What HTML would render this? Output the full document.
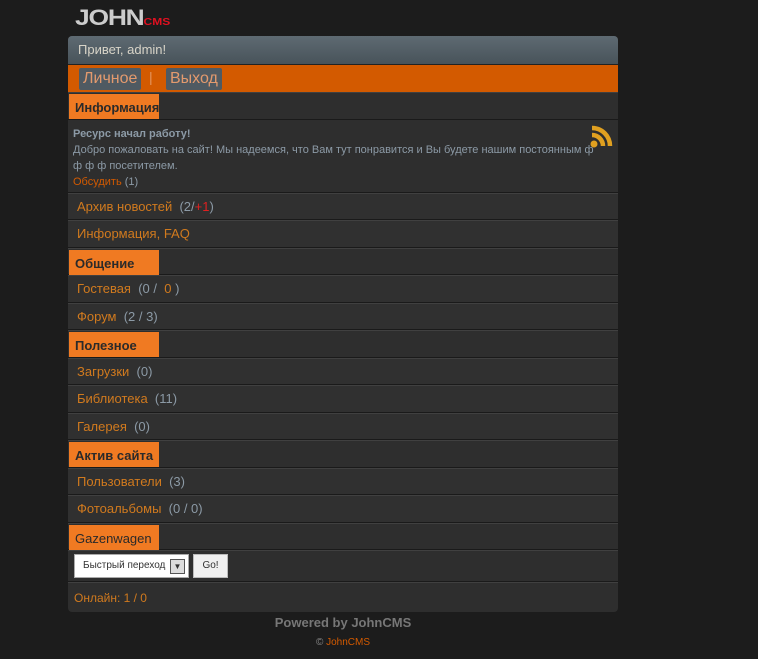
<!DOCTYPE html>
<html><head><meta charset="utf-8"><style>
body{margin:0;background:#1c1c1c;font-family:"Liberation Sans","DejaVu Sans",sans-serif;font-size:12px;}
.wrap{position:absolute;left:68px;top:36px;width:550px;background:#2e2e2e;border-radius:4px;overflow:hidden}
.hdr{height:28px;background:linear-gradient(#5e6a72,#48535a);color:#d8d4c8;font-size:13px;line-height:28px;padding-left:10px;border-bottom:1px solid #222}
.nav{height:27px;background:#d35a00;padding-left:11px;position:relative}
.nav span.b{position:absolute;top:3px;height:22px;background:#4f5a62;color:#e39a6e;font-size:16px;line-height:22px;padding:0 4px;border-radius:2px}
.sec{height:25.5px;border-top:1px solid #404040;border-bottom:1px solid #1a1a1a;background:#2e2e2e;position:relative}
.sec b{position:absolute;left:1px;top:1px;width:84px;height:25px;background:#f07a22;color:#2a2a2a;font-size:13px;line-height:27px;padding-left:6px}
.row{height:25.5px;border-top:1px solid #404040;border-bottom:1px solid #1a1a1a;background:#303030;line-height:26px;padding-left:9px;font-size:13px;color:#d17a1e}
.row i{font-style:normal;color:#8c9aa6}
.news{height:66px;padding:6px 5px 0 5px;color:#8c9aa6;font-size:11px;line-height:16px;position:relative;border-bottom:1px solid #1a1a1a}
.form{height:30px;border-top:1px solid #404040;border-bottom:1px solid #1a1a1a;position:relative}
.online{height:29px;border-top:1px solid #404040;color:#d17a1e;font-size:12px;line-height:31px;padding-left:6px}
</style></head><body>
<div style="position:absolute;left:75px;top:5px;font:bold 22px 'Liberation Sans';color:#ccc;letter-spacing:-1px;transform:scaleX(1.2);transform-origin:left">JOHN<span style="font-size:10px;color:#e01020;letter-spacing:0">CMS</span></div>
<div class="wrap">
<div class="hdr">Привет, admin!</div>
<div class="nav"><span class="b" style="left:11px">Личное</span><span style="position:absolute;left:81px;top:4px;color:#e3955e;font-size:14px">|</span><span class="b" style="left:98px">Выход</span></div>
<div class="sec"><b>Информация</b></div>
<div class="news"><b style="color:#8c9aa6">Ресурс начал работу!</b><br>Добро пожаловать на сайт! Мы надеемся, что Вам тут понравится и Вы будете нашим постоянным ф<br>ф ф ф посетителем.<br><span style="color:#d35a00">Обсудить</span> (1)
<svg style="position:absolute;right:2px;top:2px" width="28" height="28" viewBox="0 0 28 28"><circle cx="6" cy="22" r="3.5" fill="#e0a020"/><path d="M4 13a11 11 0 0 1 11 11M4 6a18 18 0 0 1 18 18" stroke="#e0a020" stroke-width="4.5" fill="none"/></svg></div>
<div class="row">Архив новостей <i>&nbsp;(2/<span style="color:#e02020">+1</span>)</i></div>
<div class="row">Информация, FAQ</div>
<div class="sec"><b>Общение</b></div>
<div class="row">Гостевая <i>&nbsp;(0 / &nbsp;<span style="color:#d17a1e">0</span> )</i></div>
<div class="row">Форум <i>&nbsp;(2 / 3)</i></div>
<div class="sec"><b>Полезное</b></div>
<div class="row">Загрузки <i>&nbsp;(0)</i></div>
<div class="row">Библиотека <i>&nbsp;(11)</i></div>
<div class="row">Галерея <i>&nbsp;(0)</i></div>
<div class="sec"><b>Актив сайта</b></div>
<div class="row">Пользователи <i>&nbsp;(3)</i></div>
<div class="row">Фотоальбомы <i>&nbsp;(0 / 0)</i></div>
<div class="sec"><b style="font-weight:normal;color:#2a2a2a">Gazenwagen</b></div>
<div class="form"><div style="position:absolute;left:6px;top:3px;height:24px;background:#fff;border:1px solid #aaa;font-size:10px;line-height:22px;color:#333;padding-left:8px;box-sizing:border-box;width:115px">Быстрый переход<span style="position:absolute;right:3px;top:4px;width:13px;height:13px;border:1px solid #555;background:#ddd;font-size:8px;line-height:13px;text-align:center">▼</span></div>
<div style="position:absolute;left:125px;top:3px;width:33px;height:22px;background:#f0f0f0;border:1px solid #bbb;font-size:10px;line-height:22px;text-align:center;color:#333">Go!</div></div>
<div class="online">Онлайн: 1 / 0</div>
</div>
<div style="position:absolute;left:0;width:686px;top:615px;text-align:center;color:#777;font-size:13px;font-weight:bold">Powered by JohnCMS</div>
<div style="position:absolute;left:0;width:686px;top:637px;text-align:center;color:#888;font-size:10px">© <span style="color:#d35a00">JohnCMS</span></div>
</body></html>
